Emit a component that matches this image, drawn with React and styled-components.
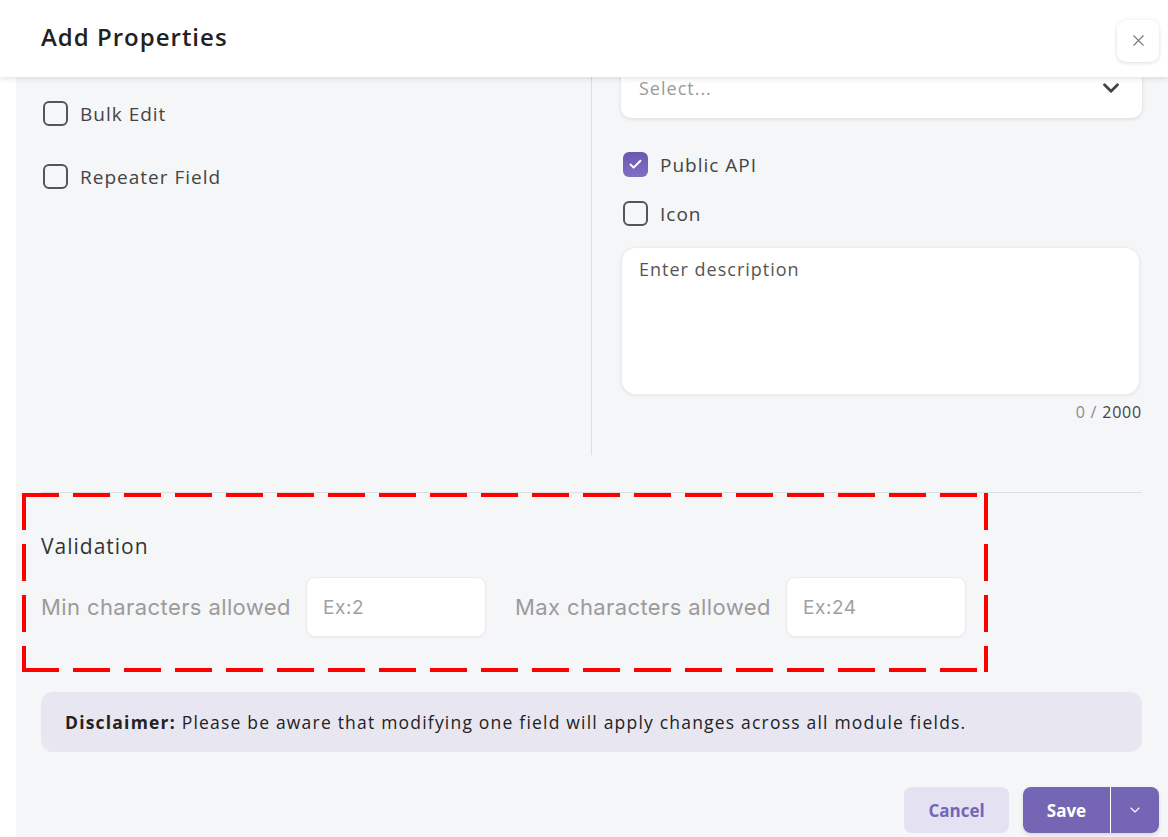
import React from "react";
import styled, { createGlobalStyle } from "styled-components";
import { X, ChevronDown, Check } from "lucide-react";

const GlobalStyle = createGlobalStyle`
  * { box-sizing: border-box; }
  body {
    margin: 0;
    background: #fff;
    font-family: "Open Sans", "Noto Sans", sans-serif;
    letter-spacing: 1px;
    color: #333;
  }
`;

const App = () => {
  return (
    <Modal>
      <GlobalStyle />
      <Header>
        <Title>Add Properties</Title>
        <CloseButton aria-label="close">
          <X size={19} strokeWidth={1.4} />
        </CloseButton>
      </Header>
      <Body>
        <TopGrid>
          <LeftColumn>
            <CheckRow>
              <Box />
              <CheckLabel>Bulk Edit</CheckLabel>
            </CheckRow>
            <CheckRow>
              <Box />
              <CheckLabel>Repeater Field</CheckLabel>
            </CheckRow>
          </LeftColumn>
          <RightColumn>
            <SelectBox>
              <Placeholder>Select...</Placeholder>
              <ChevronDown size={26} strokeWidth={2.6} color="#444" />
            </SelectBox>
            <CheckList>
              <CheckRow>
                <Box $checked>
                  <Check size={15} strokeWidth={3.2} color="#fff" />
                </Box>
                <CheckLabel>Public API</CheckLabel>
              </CheckRow>
              <CheckRow>
                <Box />
                <CheckLabel>Icon</CheckLabel>
              </CheckRow>
            </CheckList>
            <TextArea>Enter description</TextArea>
            <Counter>
              <span>0 /</span> 2000
            </Counter>
          </RightColumn>
        </TopGrid>
        <Divider />
        <ValidationSection>
          <SectionTitle>Validation</SectionTitle>
          <ValidationRow>
            <FieldLabel>Min characters allowed</FieldLabel>
            <SmallInput>Ex:2</SmallInput>
            <FieldLabel>Max characters allowed</FieldLabel>
            <SmallInput>Ex:24</SmallInput>
          </ValidationRow>
        </ValidationSection>
        <Disclaimer>
          <strong>Disclaimer:</strong>&nbsp;Please be aware that modifying one
          field will apply changes across all module fields.
        </Disclaimer>
        <Footer>
          <CancelButton>Cancel</CancelButton>
          <SplitButton>
            <SaveButton>Save</SaveButton>
            <ArrowButton aria-label="more">
              <ChevronDown size={16} strokeWidth={1.6} />
            </ArrowButton>
          </SplitButton>
        </Footer>
      </Body>
    </Modal>
  );
};

export default App;

const Modal = styled.div`
  display: flex;
  flex-direction: column;
  width: 1168px;
  height: 837px;
  background: #fff;
  overflow: hidden;
`;

const Header = styled.div`
  position: relative;
  z-index: 2;
  flex: 0 0 77px;
  display: flex;
  align-items: center;
  justify-content: space-between;
  padding: 4px 9px 0 41px;
  background: #fff;
  box-shadow: 0 2px 5px rgba(0, 0, 0, 0.1);
`;

const Title = styled.h2`
  margin: 0 0 8px;
  font-size: 24px;
  font-weight: 600;
  color: #222;
`;

const CloseButton = styled.button`
  width: 42px;
  height: 42px;
  display: flex;
  align-items: center;
  justify-content: center;
  border: none;
  border-radius: 9px;
  background: #fff;
  color: #777;
  box-shadow: 0 1px 4px rgba(0, 0, 0, 0.14);
  padding: 0;
`;

const Body = styled.div`
  flex: 1;
  margin-left: 16px;
  padding: 0 26px 0 25px;
  background: #f5f6f8;
  overflow: hidden;
`;

const TopGrid = styled.div`
  display: grid;
  grid-template-columns: 551px 1fr;
  height: 378px;
`;

const LeftColumn = styled.div`
  display: flex;
  flex-direction: column;
  gap: 38px;
  padding: 24px 0 0 2px;
  border-right: 1px solid #dcdde0;
`;

const RightColumn = styled.div`
  display: flex;
  flex-direction: column;
  padding-left: 29px;
`;

const SelectBox = styled.div`
  margin-top: -19px;
  height: 60px;
  display: flex;
  align-items: center;
  justify-content: space-between;
  padding: 0 18px;
  background: #fff;
  border-radius: 10px;
  box-shadow: 0 1px 4px rgba(0, 0, 0, 0.12);
`;

const Placeholder = styled.span`
  font-size: 18px;
  color: #9a9a9a;
`;

const CheckList = styled.div`
  display: flex;
  flex-direction: column;
  gap: 24px;
  margin: 34px 0 22px 2px;
`;

const CheckRow = styled.label`
  display: flex;
  align-items: center;
  gap: 12px;
  height: 25px;
`;

const Box = styled.span`
  width: 25px;
  height: 25px;
  display: flex;
  align-items: center;
  justify-content: center;
  border-radius: 6px;
  border: ${(p) => (p.$checked ? "none" : "2.5px solid #555")};
  background: ${(p) =>
    p.$checked ? "linear-gradient(180deg, #6a58b0, #7f70c4)" : "transparent"};
`;

const CheckLabel = styled.span`
  font-size: 19px;
  color: #444;
`;

const TextArea = styled.div`
  height: 146px;
  margin: 0 3px 0 1px;
  padding: 9px 17px;
  font-size: 18px;
  color: #555;
  background: #fff;
  border-radius: 14px;
  box-shadow: 0 0 0 1px #ececec, 0 1px 4px rgba(0, 0, 0, 0.1);
`;

const Counter = styled.div`
  margin-top: 7px;
  text-align: right;
  font-size: 16px;
  letter-spacing: 0.8px;
  color: #444;

  span {
    color: #8a8a8a;
  }
`;

const Divider = styled.hr`
  margin: 37px 0 0;
  border: none;
  border-top: 1px solid #dcdde0;
`;

const ValidationSection = styled.div`
  width: 966px;
  margin-left: -19px;
  padding: 39px 0 36px 19px;
  background:
    repeating-linear-gradient(90deg, #ff0000 0 37px, transparent 37px 51px) top left / 100% 4px no-repeat,
    repeating-linear-gradient(90deg, #ff0000 0 37px, transparent 37px 51px) bottom left / 100% 4px no-repeat,
    repeating-linear-gradient(180deg, #ff0000 0 37px, transparent 37px 51px) top left / 4px 100% no-repeat,
    repeating-linear-gradient(180deg, #ff0000 0 37px, transparent 37px 51px) top right / 4px 100% no-repeat;
`;

const SectionTitle = styled.div`
  font-size: 21px;
  line-height: 28px;
  color: #333;
  font-weight: 500;
`;

const ValidationRow = styled.div`
  display: flex;
  align-items: center;
  margin-top: 18px;
`;

const FieldLabel = styled.span`
  font-family: Inter, Roboto, sans-serif;
  font-size: 22px;
  letter-spacing: 0.4px;
  color: #9b9b9b;
  margin-right: 16px;
`;

const SmallInput = styled.div`
  width: 178px;
  height: 58px;
  display: flex;
  align-items: center;
  padding: 0 16px;
  margin-right: 30px;
  font-family: Inter, Roboto, sans-serif;
  font-size: 19px;
  letter-spacing: 0.6px;
  color: #a0a0a0;
  background: #fff;
  border-radius: 8px;
  box-shadow: 0 0 0 1px #ececec, 0 1px 3px rgba(0, 0, 0, 0.08);

  &:last-child {
    margin-right: 0;
  }
`;

const Disclaimer = styled.div`
  display: flex;
  align-items: center;
  height: 60px;
  margin-top: 20px;
  padding: 0 24px;
  border-radius: 12px;
  background: #e8e7f1;
  font-size: 17.5px;
  letter-spacing: 1.2px;
  color: #222;

  strong {
    font-weight: 700;
  }
`;

const Footer = styled.div`
  display: flex;
  justify-content: flex-end;
  gap: 14px;
  margin: 35px -17px 0 0;
`;

const CancelButton = styled.button`
  width: 105px;
  height: 46px;
  border: none;
  border-radius: 8px;
  background: #e4e1f2;
  color: #7465b8;
  font-family: inherit;
  font-size: 17px;
  font-weight: 700;
  letter-spacing: 0;
`;

const SplitButton = styled.div`
  display: flex;
  height: 46px;
  border-radius: 8px;
  overflow: hidden;
  box-shadow: 0 2px 4px rgba(0, 0, 0, 0.12);
`;

const SaveButton = styled.button`
  width: 88px;
  border: none;
  border-right: 1px solid #fff;
  background: #7466b4;
  color: #fff;
  font-family: inherit;
  font-size: 17px;
  font-weight: 700;
  letter-spacing: 0;
`;

const ArrowButton = styled.button`
  width: 48px;
  display: flex;
  align-items: center;
  justify-content: center;
  border: none;
  background: #7466b4;
  color: #fff;
  padding: 0;
`;
